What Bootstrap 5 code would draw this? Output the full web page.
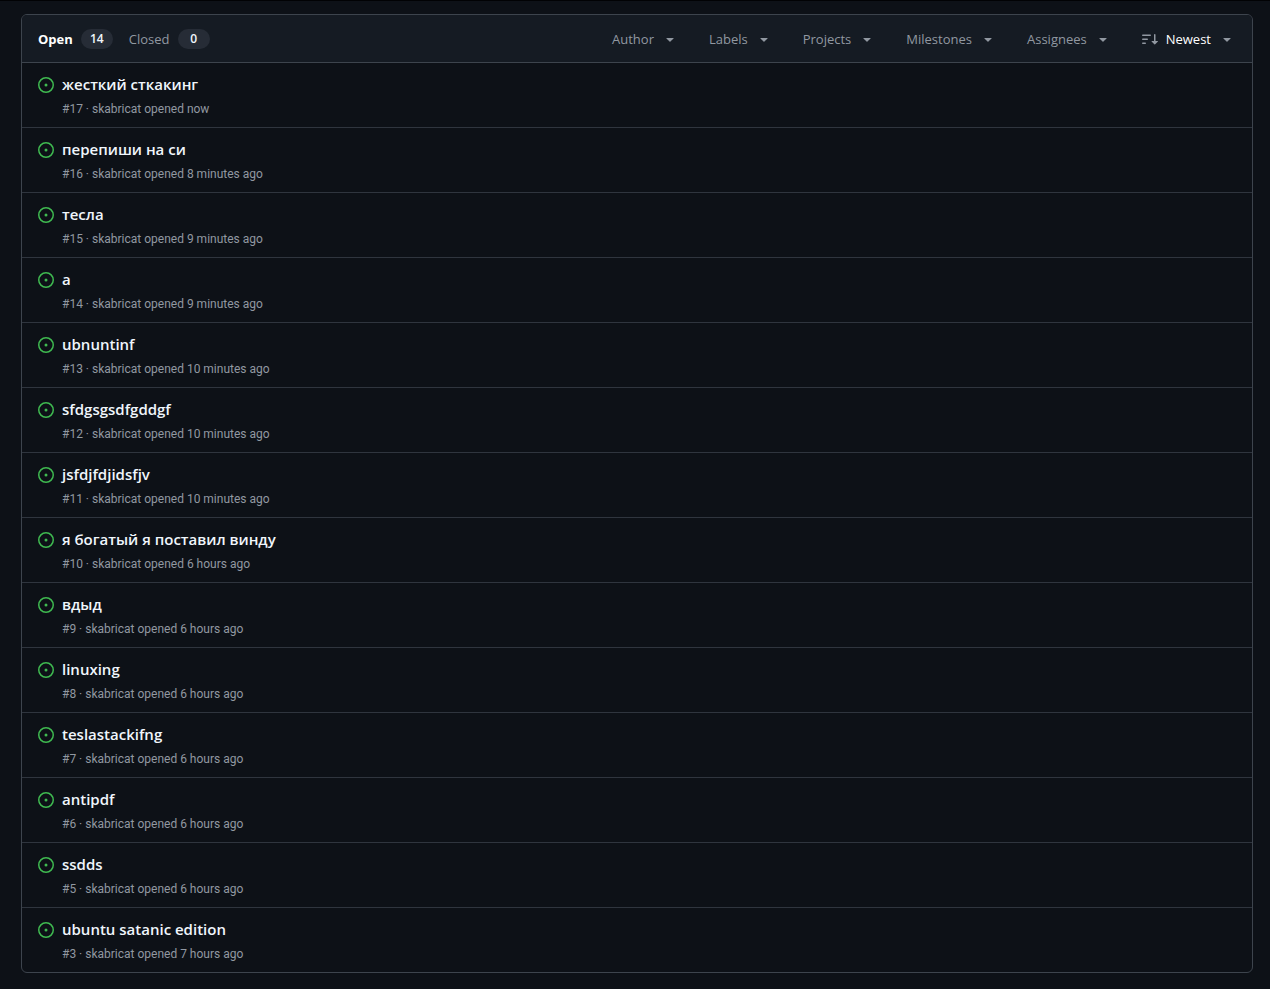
<!DOCTYPE html>
<html lang="en" data-bs-theme="dark">
<head>
<meta charset="utf-8">
<meta name="viewport" content="width=device-width, initial-scale=1">
<title>Issues</title>
<link rel="stylesheet" href="https://cdn.jsdelivr.net/npm/bootstrap@5.3.0/dist/css/bootstrap.min.css">
<style>
body{background:#0d1117;color:#f0f6fc;font-family:"Segoe UI","Open Sans","Noto Sans",sans-serif;font-size:13px;line-height:20px;border-top:1px solid #010204}
main{padding:13px 17px 16px 21px}
.issue-box{border:1px solid #3d444d;border-radius:6px;overflow:hidden}
.issue-bar{height:48px;padding:0 17px 0 16px;background:#151b23;border-bottom:1px solid #3d444d}
.tabs-group,.filter-group button{color:#9198a1}
.tabs-group{gap:16px}
.tabs-group a{gap:8px;color:#9198a1}
.tabs-group a.current{color:#fff;font-weight:700}
.counter{background:#262c36;color:#f0f6fc;font-size:12px;font-weight:600;line-height:20px;min-width:32px;border-radius:10px}
.filter-group{gap:31px}
.filter-group button{gap:8px;font-size:13px;line-height:20px;border:0;padding:0}
.filter-group .sort-name{color:#fff;font-weight:500}
.issue-row{height:65px;padding:11px 15px 0 16px;gap:8px;border-bottom:1px solid #2f353e}
.issue-row:last-child{border-bottom:0;height:64px}
.issue-row svg{margin-top:3px;color:#3fb950}
.issue-name{color:#f0f6fc;font-size:15px;font-weight:600;line-height:20px}
.issue-meta{color:#9198a1;font-family:"Segoe UI",Roboto,sans-serif;font-size:12px;line-height:16px;margin-top:7px}
svg{fill:currentColor;flex:none}
</style>
</head>
<body>
<svg class="d-none">
<symbol id="opened" viewBox="0 0 16 16"><path d="M8 9.5a1.5 1.5 0 1 0 0-3 1.5 1.5 0 0 0 0 3Z"/><path d="M8 0a8 8 0 1 1 0 16A8 8 0 0 1 8 0ZM1.5 8a6.5 6.5 0 1 0 13 0 6.5 6.5 0 0 0-13 0Z"/></symbol>
<symbol id="caret" viewBox="0 0 16 16"><path d="m4.427 7.427 3.396 3.396a.25.25 0 0 0 .354 0l3.396-3.396A.25.25 0 0 0 11.396 7H4.604a.25.25 0 0 0-.177.427Z"/></symbol>
<symbol id="sort" viewBox="0 0 16 16"><path d="M0 4.25a.75.75 0 0 1 .75-.75h7.5a.75.75 0 0 1 0 1.5H.75A.75.75 0 0 1 0 4.25Zm0 4a.75.75 0 0 1 .75-.75h4.5a.75.75 0 0 1 0 1.5H.75A.75.75 0 0 1 0 8.25Zm0 4a.75.75 0 0 1 .75-.75h2.5a.75.75 0 0 1 0 1.5H.75a.75.75 0 0 1-.75-.75ZM13.5 10h2.25a.25.25 0 0 1 .177.427l-3 3a.25.25 0 0 1-.354 0l-3-3A.25.25 0 0 1 9.75 10H12V3.75a.75.75 0 0 1 1.5 0V10Z"/></symbol>
</svg>
<main>
<section class="issue-box">
<header class="issue-bar d-flex align-items-center justify-content-between">
<nav class="tabs-group d-flex" aria-label="Issue state">
<a href="#" class="current d-flex align-items-center text-decoration-none">Open <span class="counter text-center">14</span></a>
<a href="#" class="d-flex align-items-center text-decoration-none">Closed <span class="counter text-center">0</span></a>
</nav>
<div class="filter-group d-flex">
<button type="button" class="btn d-flex align-items-center">Author<svg width="16" height="16"><use href="#caret"/></svg></button>
<button type="button" class="btn d-flex align-items-center">Labels<svg width="16" height="16"><use href="#caret"/></svg></button>
<button type="button" class="btn d-flex align-items-center">Projects<svg width="16" height="16"><use href="#caret"/></svg></button>
<button type="button" class="btn d-flex align-items-center">Milestones<svg width="16" height="16"><use href="#caret"/></svg></button>
<button type="button" class="btn d-flex align-items-center">Assignees<svg width="16" height="16"><use href="#caret"/></svg></button>
<button type="button" class="btn d-flex align-items-center"><svg width="16" height="16"><use href="#sort"/></svg><span class="sort-name">Newest</span><svg width="16" height="16"><use href="#caret"/></svg></button>
</div>
</header>
<ul class="list-unstyled mb-0" id="issues"></ul>
</section>
</main>
<script>
const issues = [
  [17, "жесткий сткакинг", "now"],
  [16, "перепиши на си", "8 minutes ago"],
  [15, "тесла", "9 minutes ago"],
  [14, "а", "9 minutes ago"],
  [13, "ubnuntinf", "10 minutes ago"],
  [12, "sfdgsgsdfgddgf", "10 minutes ago"],
  [11, "jsfdjfdjidsfjv", "10 minutes ago"],
  [10, "я богатый я поставил винду", "6 hours ago"],
  [9, "вдыд", "6 hours ago"],
  [8, "linuxing", "6 hours ago"],
  [7, "teslastackifng", "6 hours ago"],
  [6, "antipdf", "6 hours ago"],
  [5, "ssdds", "6 hours ago"],
  [3, "ubuntu satanic edition", "7 hours ago"]
];
document.getElementById("issues").innerHTML = issues.map(([id, name, when]) => `
<li class="issue-row d-flex align-items-start">
<svg width="16" height="16" role="img" aria-label="Open issue"><use href="#opened"/></svg>
<div><a href="#" class="issue-name d-block text-decoration-none">${name}</a>
<div class="issue-meta">#${id} · skabricat opened ${when}</div></div>
</li>`).join("");
</script>
<script src="https://cdn.jsdelivr.net/npm/bootstrap@5.3.0/dist/js/bootstrap.bundle.min.js"></script>
</body>
</html>
